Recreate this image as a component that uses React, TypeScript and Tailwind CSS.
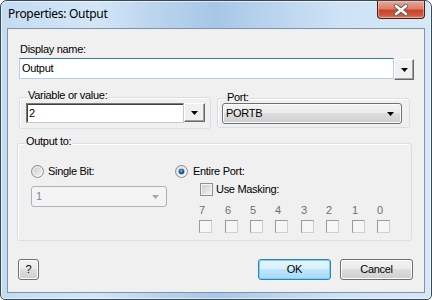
import React from "react";

const body = { fontFamily: '"Liberation Sans", Arial, sans-serif' };

function DropBtn({ w, h }: { w: string; h: string }) {
  return (
    <div className={`${w} ${h} flex items-center justify-center border border-t-white border-l-white border-r-[#696969] border-b-[#696969] bg-[#f0f0f0] shadow-[inset_-1px_-1px_0_#a0a0a0]`}>
      <svg width="7" height="4" viewBox="0 0 7 4">
        <path d="M0 0H7L3.5 4Z" fill="#000" />
      </svg>
    </div>
  );
}

function Radio({ checked, id }: { checked?: boolean; id: string }) {
  return (
    <svg width="13" height="13" viewBox="0 0 13 13" className="shrink-0">
      <defs>
        <linearGradient id={`rg${id}`} x1="0" y1="0" x2="1" y2="1">
          <stop offset="0" stopColor="#c9c9c9" />
          <stop offset="1" stopColor="#f7f7f7" />
        </linearGradient>
        <radialGradient id={`rd${id}`} cx="0.45" cy="0.4" r="0.6">
          <stop offset="0" stopColor="#7cc6f3" />
          <stop offset="0.55" stopColor="#1466ad" />
          <stop offset="1" stopColor="#0a3a6e" />
        </radialGradient>
      </defs>
      <circle cx="6.5" cy="6.5" r="6" fill={`url(#rg${id})`} stroke="#8e8f8f" />
      <circle cx="6.5" cy="6.5" r="4.5" fill="none" stroke="#fafafa" strokeOpacity="0.8" />
      {checked && <circle cx="6.5" cy="6.5" r="2.8" fill={`url(#rd${id})`} />}
    </svg>
  );
}

function BitBox() {
  return (
    <div className="w-[13px] h-[13px] border border-t-[#9a9a9a] border-l-[#9a9a9a] border-r-[#cfcfcf] border-b-[#cfcfcf] bg-[#f6f6f6]" />
  );
}

const cellW = ["w-[26px]", "w-[25px]", "w-[25px]", "w-[26px]", "w-[25px]", "w-[26px]", "w-[25px]", "w-[13px]"];
const bits = ["7", "6", "5", "4", "3", "2", "1", "0"];

function WinButton({ children, w, def }: { children: React.ReactNode; w: string; def?: boolean }) {
  return def ? (
    <div className={`${w} h-[21px] rounded-[3px] border border-[#3c7fb1] bg-[linear-gradient(to_bottom,#e8f5fc_0%,#d9f0fc_48%,#bee6fd_50%,#a7d9f5_100%)] shadow-[inset_0_0_0_1px_#6ad6fb] flex items-center justify-center text-[11px] text-black`}>
      {children}
    </div>
  ) : (
    <div className={`${w} h-[21px] rounded-[3px] border border-[#707070] bg-[linear-gradient(to_bottom,#f2f2f2_0%,#ebebeb_48%,#dddddd_50%,#cfcfcf_100%)] shadow-[inset_0_0_0_1px_#fcfcfc] flex items-center justify-center text-[11px] text-black`}>
      {children}
    </div>
  );
}

export default function App() {
  return (
    <div className="w-[432px] h-[300px] overflow-hidden">
      <div className="w-[432px] h-[300px] flex flex-col rounded-t-[7px] rounded-b-[5px] border border-[#3a4756] bg-[linear-gradient(to_right,#c3dbf2_0%,#d3e6f8_22%,#bcd5ee_35%,#a7c7e7_50%,#b9d3ee_62%,#cfe3f6_80%,#d6e8f8_100%)] shadow-[inset_0_0_0_1px_rgba(255,255,255,0.6)]">
        {/* Title bar */}
        <div className="h-[27px] flex items-start shrink-0">
          <div className="ml-[7px] mt-[5px] text-[12px] leading-[16px] tracking-[-0.3px] text-black" style={{ fontFamily: '"Noto Sans", sans-serif' }}>
            Properties: Output
          </div>
          <div className="ml-auto mr-[6px] w-[48px] h-[18px] rounded-b-[4px] border border-t-0 border-[#4a1c17] bg-[linear-gradient(to_bottom,#e9a99a_0%,#dd7e68_45%,#c7432b_55%,#d05a3f_85%,#e08a6c_100%)] shadow-[inset_0_0_0_1px_rgba(255,210,200,0.5)] flex items-center justify-center">
            <svg width="16" height="12" viewBox="0 0 16 12">
              <path d="M3 2L13 10M13 2L3 10" stroke="#5a5a5a" strokeWidth="4.2" strokeLinecap="round" />
              <path d="M3 2L13 10M13 2L3 10" stroke="#ffffff" strokeWidth="2.6" strokeLinecap="round" />
            </svg>
          </div>
        </div>

        {/* Client area */}
        <div className="ml-[6px] w-[418px] h-[265px] shrink-0 border border-[#7f92a8] bg-[#f0f0f0] flex flex-col text-[11px] text-black tracking-[-0.3px]" style={body}>
          <div className="ml-[12px] mt-[14px] h-[13px] leading-[13px]">Display name:</div>
          <div className="ml-[11px] mt-[2px] flex items-start">
            <div className="w-[375px] h-[21px] border border-[#b5cfe7] border-t-[#3d7bad] bg-white flex items-center pl-[2px] leading-[13px]">
              Output
            </div>
            <div className="mt-[1px]">
              <DropBtn w="w-[20px]" h="h-[21px]" />
            </div>
          </div>

          {/* Variable / Port */}
          <div className="ml-[11px] mt-[17px] flex items-start">
            <div className="w-[192px] h-[32px] rounded-[3px] border border-[#d5dfe5] shadow-[inset_1px_1px_0_#fff] flex flex-col">
              <div className="-mt-[9px] ml-[7px] px-[1px] w-fit h-[13px] leading-[13px] bg-[#f0f0f0]">Variable or value:</div>
              <div className="mt-[1px] ml-[6px] flex items-start">
                <div className="w-[158px] h-[20px] border border-[#7a7a7a] border-b-[#c8c8c8] border-r-[#c8c8c8] shadow-[inset_1px_1px_0_#404040] bg-white flex items-center pl-[2px] leading-[13px]">
                  2
                </div>
                <DropBtn w="w-[21px]" h="h-[19px]" />
              </div>
            </div>
            <div className="ml-[6px] mt-[1px] w-[193px] h-[30px] rounded-[3px] border border-[#d5dfe5] shadow-[inset_1px_1px_0_#fff] flex flex-col">
              <div className="-mt-[8px] ml-[8px] px-[1px] w-fit h-[13px] leading-[13px] bg-[#f0f0f0]">Port:</div>
              <div className="-mt-[1px] ml-[4px] w-[180px] h-[21px] rounded-[3px] border border-[#707070] bg-[linear-gradient(to_bottom,#f2f2f2_0%,#ebebeb_48%,#dddddd_50%,#cfcfcf_100%)] shadow-[inset_0_0_0_1px_#fcfcfc] flex items-center pl-[3px] pr-[7px]">
                <span className="leading-[13px]">PORTB</span>
                <svg width="7" height="4" viewBox="0 0 7 4" className="ml-auto">
                  <path d="M0 0H7L3.5 4Z" fill="#000" />
                </svg>
              </div>
            </div>
          </div>

          {/* Output to */}
          <div className="ml-[9px] mt-[14px] w-[395px] h-[98px] rounded-[3px] border border-[#d5dfe5] shadow-[inset_1px_1px_0_#fff] flex flex-col">
            <div className="-mt-[9px] ml-[7px] px-[1px] w-fit h-[13px] leading-[13px] bg-[#f0f0f0]">Output to:</div>
            <div className="mt-[17px] flex items-start">
              <div className="ml-[13px] w-[136px] flex flex-col">
                <div className="h-[13px] flex items-center">
                  <Radio id="a" />
                  <span className="ml-[4px] leading-[13px]">Single Bit:</span>
                </div>
                <div className="mt-[8px] w-[136px] h-[21px] rounded-[3px] border border-[#adb2b5] bg-[#f4f4f4] flex items-center pl-[4px] pr-[7px]">
                  <span className="leading-[13px] text-[#8a8296]">1</span>
                  <svg width="7" height="4" viewBox="0 0 7 4" className="ml-auto">
                    <path d="M0 0H7L3.5 4Z" fill="#a5a5a5" />
                  </svg>
                </div>
              </div>
              <div className="ml-[8px] flex flex-col">
                <div className="h-[13px] flex items-center">
                  <Radio id="b" checked />
                  <span className="ml-[5px] leading-[13px]">Entire Port:</span>
                </div>
                <div className="mt-[5px] ml-[25px] h-[13px] flex items-center">
                  <div className="w-[13px] h-[13px] border border-[#8e8f8f] bg-[linear-gradient(135deg,#cbcbcb,#f5f5f5)] shadow-[inset_0_0_0_1px_#f4f4f4]" />
                  <span className="ml-[3px] leading-[13px]">Use Masking:</span>
                </div>
                <div className="mt-[8px] ml-[24px] flex">
                  {bits.map((b, i) => (
                    <div key={b} className={`${cellW[i]} h-[13px] leading-[13px] text-[#6d6d6d]`}>
                      {b}
                    </div>
                  ))}
                </div>
                <div className="mt-[3px] ml-[24px] flex">
                  {bits.map((b, i) => (
                    <div key={b} className={cellW[i]}>
                      <BitBox />
                    </div>
                  ))}
                </div>
              </div>
            </div>
          </div>

          {/* Buttons */}
          <div className="mt-[18px] flex items-start">
            <div className="ml-[10px]">
              <WinButton w="w-[21px]">?</WinButton>
            </div>
            <div className="ml-auto">
              <WinButton w="w-[73px]" def>
                OK
              </WinButton>
            </div>
            <div className="ml-[9px] mr-[11px]">
              <WinButton w="w-[73px]">Cancel</WinButton>
            </div>
          </div>
        </div>
      </div>
    </div>
  );
}
